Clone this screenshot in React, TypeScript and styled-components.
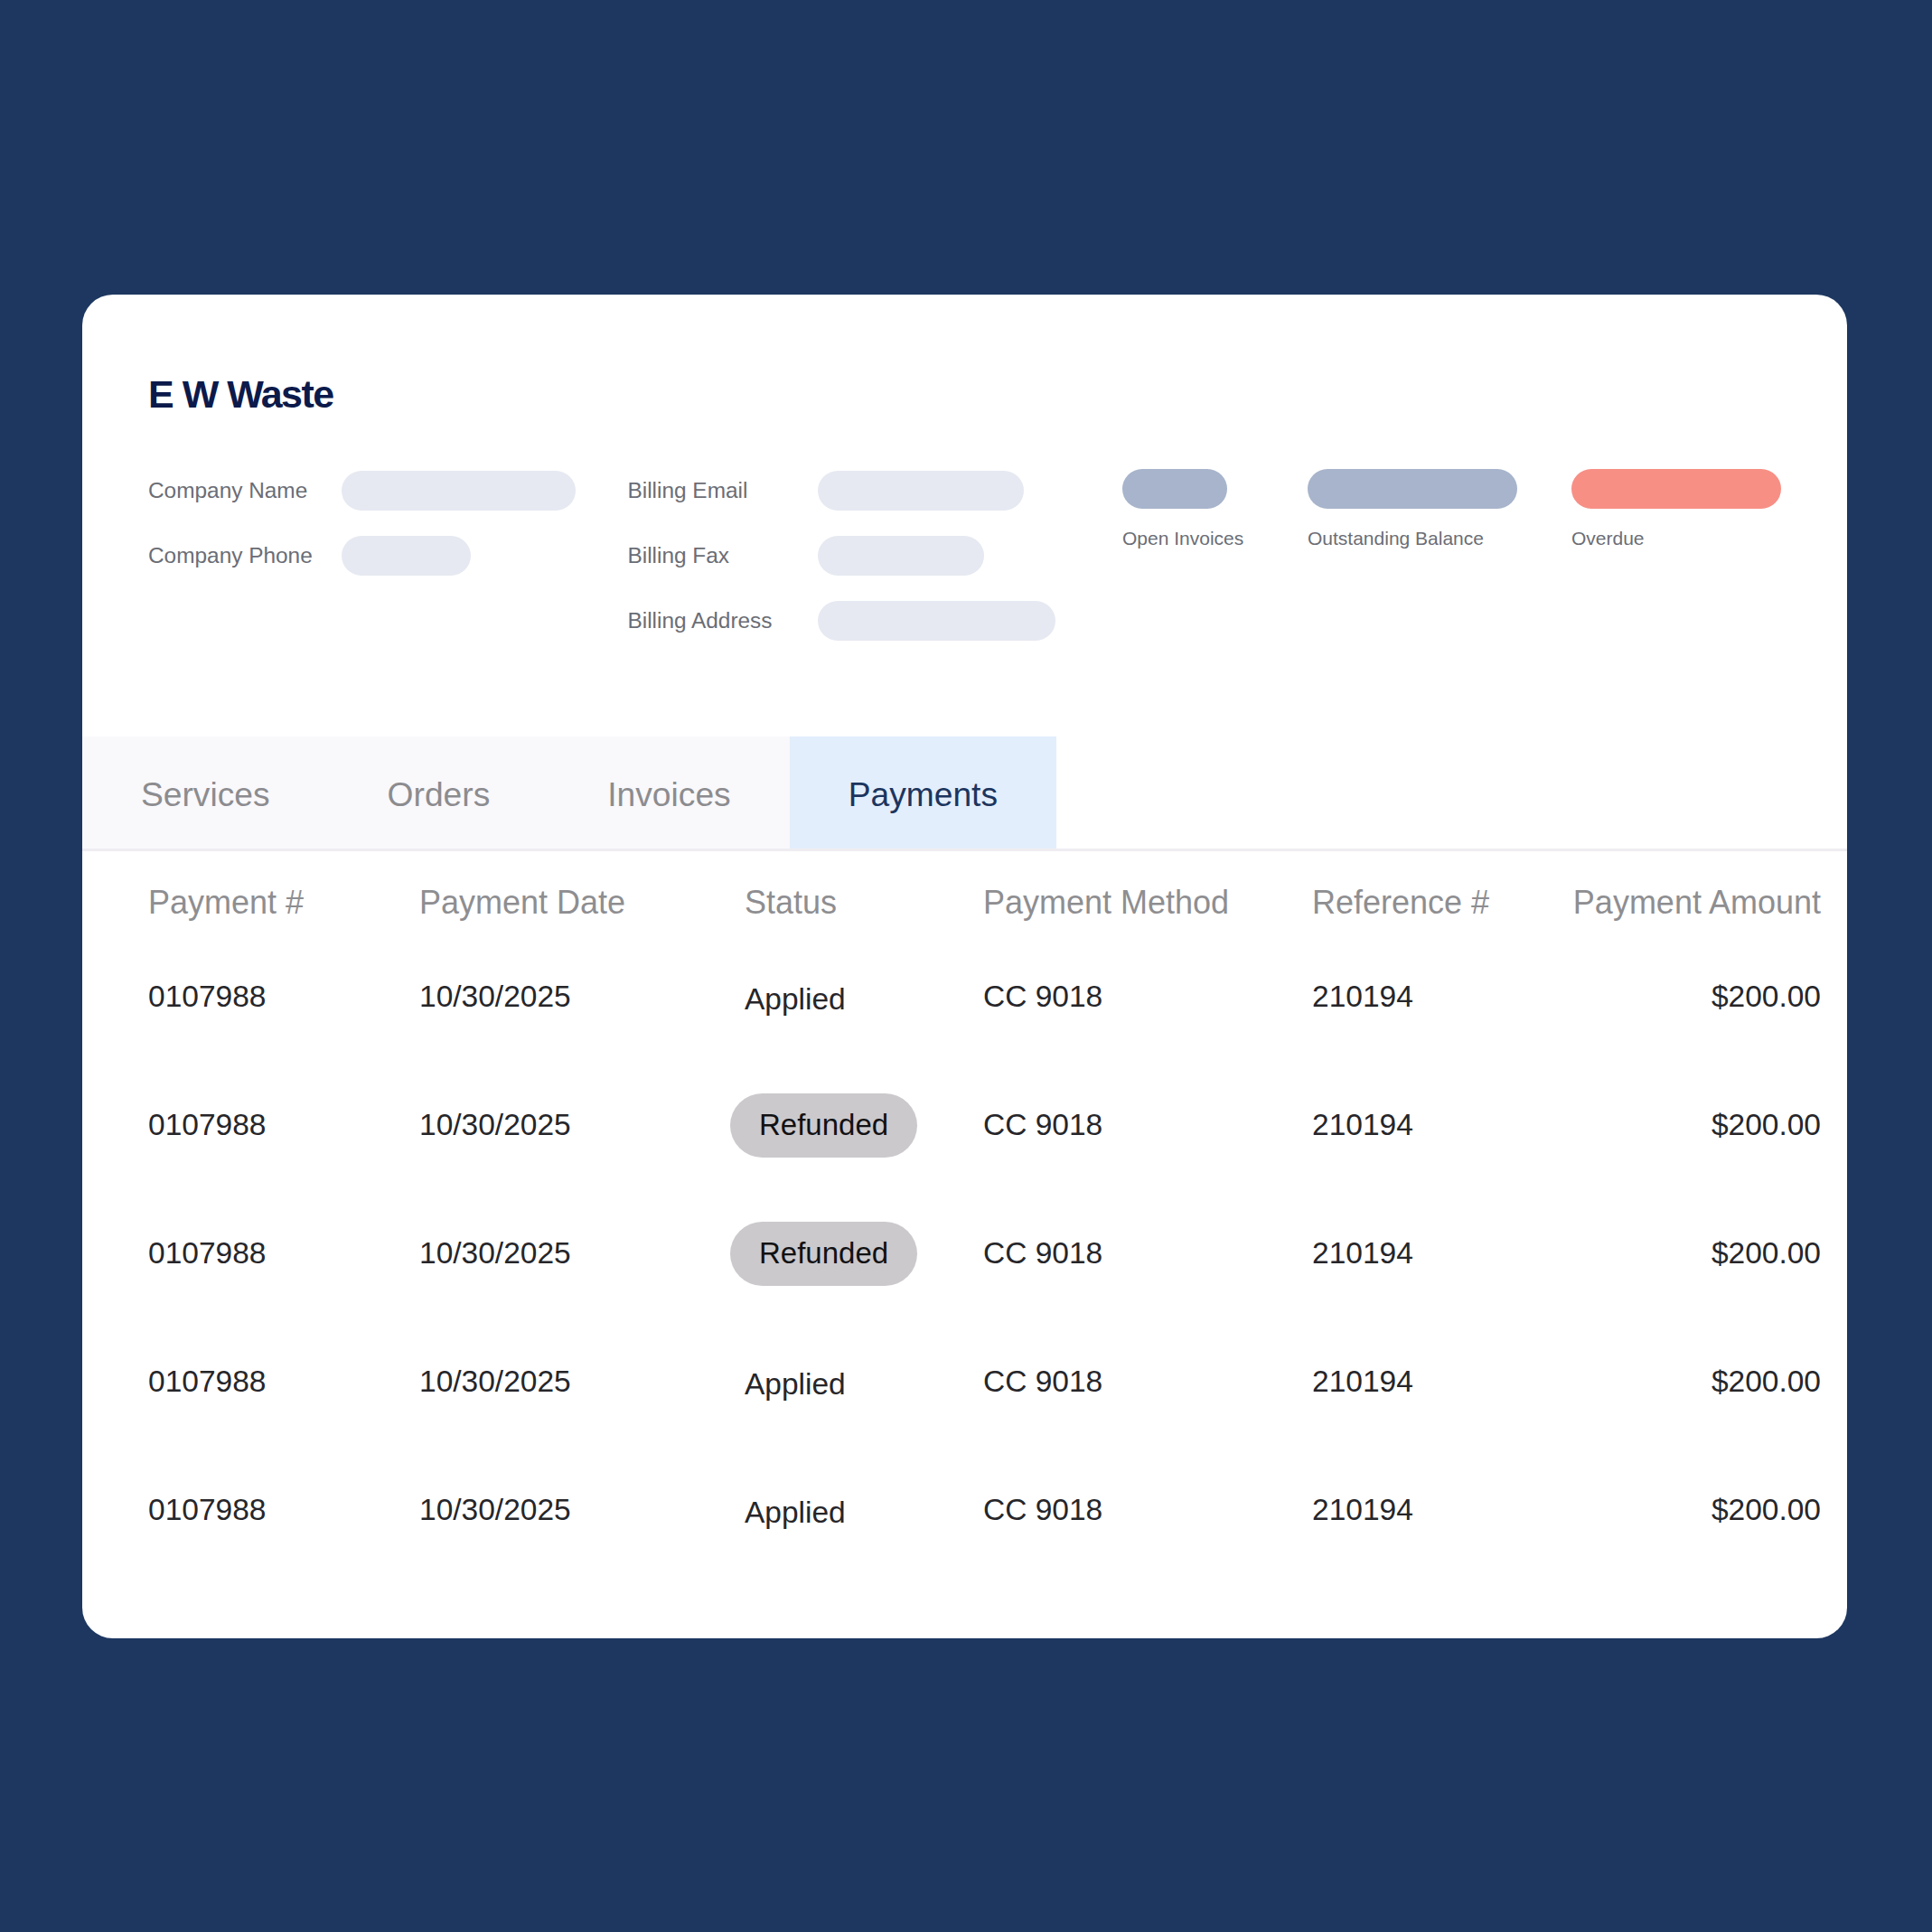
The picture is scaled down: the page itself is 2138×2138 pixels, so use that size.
import React from "react";
import styled, { createGlobalStyle } from "styled-components";

const Global = createGlobalStyle`
  html, body { margin: 0; padding: 0; background: #1d3760; }
  body { font-family: "Liberation Sans", Arial, sans-serif; }
`;

const Page = styled.div`
  width: 2138px;
  height: 2138px;
  box-sizing: border-box;
  padding: 326px 94px 0 91px;
  background: #1d3760;
`;

const Card = styled.div`
  width: 1953px;
  height: 1487px;
  background: #ffffff;
  border-radius: 34px;
  overflow: hidden;
  display: flex;
  flex-direction: column;
`;

const Header = styled.div`
  padding: 84px 73px 0 73px;
`;

const Title = styled.h1`
  margin: 0;
  font-size: 43px;
  line-height: 52px;
  font-weight: 700;
  letter-spacing: -1.5px;
  color: #0c1a4b;
`;

const InfoGrid = styled.div`
  display: flex;
  margin-top: 45px;
`;

const InfoCol = styled.div<{ $w: number }>`
  width: ${(p) => p.$w}px;
  display: flex;
  flex-direction: column;
`;

const InfoRow = styled.div`
  height: 72px;
  display: flex;
  align-items: center;
`;

const Label = styled.span<{ $w: number }>`
  width: ${(p) => p.$w}px;
  flex: none;
  font-size: 24.4px;
  color: #6b6d75;
  white-space: nowrap;
`;

const Placeholder = styled.div<{ $w: number }>`
  width: ${(p) => p.$w}px;
  height: 44px;
  border-radius: 22px;
  background: #e6e9f1;
`;

const Stats = styled.div`
  display: flex;
  margin-top: 12px;
`;

const Stat = styled.div<{ $w: number }>`
  width: ${(p) => p.$w}px;
  display: flex;
  flex-direction: column;
`;

const StatBar = styled.div<{ $w: number; $color: string }>`
  width: ${(p) => p.$w}px;
  height: 44px;
  border-radius: 22px;
  background: ${(p) => p.$color};
`;

const StatLabel = styled.span`
  margin-top: 21px;
  font-size: 21px;
  line-height: 24px;
  color: #6b6d75;
  white-space: nowrap;
`;

const TabBar = styled.div`
  margin-top: 92px;
  border-bottom: 3px solid #efedf2;
`;

const TabList = styled.div`
  display: inline-flex;
  background: #f9f8fb;
  height: 124px;
`;

const Tab = styled.div<{ $active?: boolean }>`
  display: flex;
  align-items: center;
  padding: 4px 65px 0;
  font-size: 37.2px;
  color: ${(p) => (p.$active ? "#1c355e" : "#8c8c8f")};
  background: ${(p) => (p.$active ? "#e3eefc" : "transparent")};
`;

const Table = styled.div`
  padding: 0 29px 0 73px;
`;

const cols = "300px 360px 264px 364px 200px 1fr";

const HeadRow = styled.div`
  display: grid;
  grid-template-columns: ${cols};
  height: 90px;
  padding-top: 24px;
  box-sizing: border-box;
`;

const HeadCell = styled.div<{ $right?: boolean }>`
  font-size: 36px;
  line-height: 66px;
  color: #8e8e91;
  text-align: ${(p) => (p.$right ? "right" : "left")};
  white-space: nowrap;
`;

const Row = styled.div`
  display: grid;
  grid-template-columns: ${cols};
  height: 142px;
  align-items: center;
`;

const Cell = styled.div<{ $right?: boolean }>`
  font-size: 33.5px;
  color: #26262a;
  text-align: ${(p) => (p.$right ? "right" : "left")};
  white-space: nowrap;
`;

const StatusText = styled.span`
  display: inline-block;
  padding-top: 5px;
  font-size: 33.5px;
  color: #26262a;
`;

const StatusPill = styled.span`
  display: inline-flex;
  align-items: center;
  height: 71px;
  padding: 0 32px;
  margin-left: -16px;
  border-radius: 36px;
  background: #cbc9cc;
  font-size: 33px;
  color: #111114;
`;

const rows = ["Applied", "Refunded", "Refunded", "Applied", "Applied"];

export default function App() {
  return (
    <>
      <Global />
      <Page>
        <Card>
          <Header>
            <Title>E W Waste</Title>
            <InfoGrid>
              <InfoCol $w={531}>
                <InfoRow>
                  <Label $w={214}>Company Name</Label>
                  <Placeholder $w={259} />
                </InfoRow>
                <InfoRow>
                  <Label $w={214}>Company Phone</Label>
                  <Placeholder $w={143} />
                </InfoRow>
              </InfoCol>
              <InfoCol $w={548}>
                <InfoRow>
                  <Label $w={210}>Billing Email</Label>
                  <Placeholder $w={228} />
                </InfoRow>
                <InfoRow>
                  <Label $w={210}>Billing Fax</Label>
                  <Placeholder $w={184} />
                </InfoRow>
                <InfoRow>
                  <Label $w={210}>Billing Address</Label>
                  <Placeholder $w={263} />
                </InfoRow>
              </InfoCol>
              <Stats>
                <Stat $w={205}>
                  <StatBar $w={116} $color="#a7b4cb" />
                  <StatLabel>Open Invoices</StatLabel>
                </Stat>
                <Stat $w={292}>
                  <StatBar $w={232} $color="#a7b4cb" />
                  <StatLabel>Outstanding Balance</StatLabel>
                </Stat>
                <Stat $w={232}>
                  <StatBar $w={232} $color="#f78f85" />
                  <StatLabel>Overdue</StatLabel>
                </Stat>
              </Stats>
            </InfoGrid>
          </Header>
          <TabBar>
            <TabList>
              <Tab>Services</Tab>
              <Tab>Orders</Tab>
              <Tab>Invoices</Tab>
              <Tab $active>Payments</Tab>
            </TabList>
          </TabBar>
          <Table>
            <HeadRow>
              <HeadCell>Payment #</HeadCell>
              <HeadCell>Payment Date</HeadCell>
              <HeadCell>Status</HeadCell>
              <HeadCell>Payment Method</HeadCell>
              <HeadCell>Reference #</HeadCell>
              <HeadCell $right>Payment Amount</HeadCell>
            </HeadRow>
            {rows.map((s, i) => (
              <Row key={i}>
                <Cell>0107988</Cell>
                <Cell>10/30/2025</Cell>
                <Cell>
                  {s === "Refunded" ? (
                    <StatusPill>{s}</StatusPill>
                  ) : (
                    <StatusText>{s}</StatusText>
                  )}
                </Cell>
                <Cell>CC 9018</Cell>
                <Cell>210194</Cell>
                <Cell $right>$200.00</Cell>
              </Row>
            ))}
          </Table>
        </Card>
      </Page>
    </>
  );
}
